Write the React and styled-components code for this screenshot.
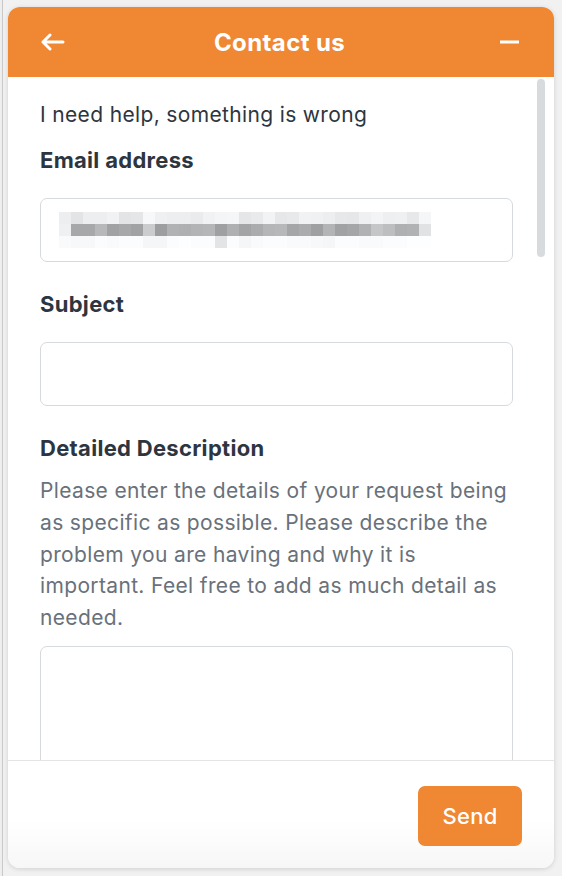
import React from 'react';
import styled, { createGlobalStyle } from 'styled-components';

const GlobalStyle = createGlobalStyle`
  html, body {
    margin: 0;
    padding: 0;
  }
  body {
    font-family: Inter, "Noto Sans", Roboto, sans-serif;
    background: #f1f1f1;
  }
`;

// blurred email, row by row (grey levels)
const mosaic = [
  [236, 226, 236, 236, 240, 226, 228, 246, 238, 236, 236, 233, 240, 243, 244, 228, 232, 241, 229, 231, 240, 239, 236, 230, 229, 238, 242, 237, 238, 230, 244],
  [238, 166, 166, 182, 160, 166, 160, 202, 156, 176, 174, 178, 180, 158, 174, 162, 170, 180, 182, 164, 170, 158, 178, 160, 164, 176, 196, 188, 174, 176, 224],
  [248, 246, 246, 250, 248, 250, 250, 244, 244, 250, 252, 250, 250, 226, 250, 244, 248, 250, 250, 248, 248, 246, 244, 250, 250, 248, 248, 250, 250, 252, 252],
];

const Page = styled.div`
  height: 876px;
  box-sizing: border-box;
  padding: 7px 8px 8px 8px;
  display: flex;
  background: linear-gradient(to right, #eeeeee 2px, #c9c9c9 2px, #c9c9c9 3px, #f1f1f1 3px);
`;

const Panel = styled.div`
  width: 546px;
  display: flex;
  flex-direction: column;
  background: #fff;
  border-radius: 12px;
  overflow: hidden;
  box-shadow: 0 1px 5px rgba(0, 0, 0, 0.14);
`;

const Header = styled.div`
  height: 70px;
  flex-shrink: 0;
  background: #ef8733;
  display: grid;
  grid-template-columns: 40px 1fr 40px;
  align-items: center;
  padding: 0 35px 0 32px;
  color: #fff;
`;

const Title = styled.div`
  text-align: center;
  font-size: 24px;
  font-weight: 700;
  letter-spacing: 0.4px;
`;

const IconSlot = styled.div`
  display: flex;
  justify-content: ${(p) => (p.$end ? 'flex-end' : 'flex-start')};
  align-items: center;
`;

const Body = styled.div`
  flex: 1;
  position: relative;
  overflow: hidden;
`;

const Thumb = styled.div`
  position: absolute;
  top: 2px;
  right: 9px;
  width: 8px;
  height: 178px;
  border-radius: 4px;
  background: #d8dbde;
`;

const Content = styled.div`
  padding: 22px 41px 0 32px;
  color: #2d3640;
`;

const Intro = styled.p`
  margin: 0 0 13px;
  font-size: 21px;
  letter-spacing: 0.35px;
  line-height: 32px;
`;

const Field = styled.div`
  display: flex;
  flex-direction: column;
  gap: 22px;
  margin-bottom: 26px;
`;

const Label = styled.label`
  font-size: 22px;
  font-weight: 700;
  letter-spacing: 0.3px;
  line-height: 32px;
`;

const Hint = styled.p`
  margin: -11px 0 0;
  font-size: 21px;
  letter-spacing: 0.35px;
  line-height: 31.75px;
  color: #69717a;
`;

const Input = styled.div`
  height: 64px;
  box-sizing: border-box;
  border: 1px solid #d6dadd;
  border-radius: 7px;
  display: flex;
  align-items: center;
  padding-left: 18px;
`;

const TextArea = styled(Input)`
  height: 200px;
  margin-top: -10px;
`;

const Mosaic = styled.div`
  display: grid;
  grid-template-columns: repeat(31, 12px);
  grid-auto-rows: 12px;
`;

const Cell = styled.div`
  background: ${(p) => `rgb(${p.$g}, ${p.$g + 2}, ${p.$g + 4})`};
`;

const Footer = styled.div`
  height: 108px;
  flex-shrink: 0;
  box-sizing: border-box;
  border-top: 1px solid #e4e4e4;
  background: linear-gradient(to bottom, #ffffff 55%, #f7f7f7 100%);
  display: flex;
  justify-content: flex-end;
  align-items: center;
  padding: 2px 32px 0 0;
`;

const SendButton = styled.button`
  width: 104px;
  height: 60px;
  border: none;
  border-radius: 7px;
  background: #ef8733;
  color: #fff;
  font-family: inherit;
  font-size: 22px;
  font-weight: 500;
  letter-spacing: 0.3px;
`;

function BackIcon() {
  return (
    <svg width="25" height="18" viewBox="0 0 25 18" fill="none">
      <path d="M23 9H3M10 2L3 9L10 16" stroke="#fff" strokeWidth="3" strokeLinecap="round" strokeLinejoin="round" />
    </svg>
  );
}

function MinusIcon() {
  return (
    <svg width="19" height="4" viewBox="0 0 19 4">
      <rect x="0" y="0.5" width="19" height="3" fill="#fff" />
    </svg>
  );
}

export default function App() {
  return (
    <Page>
      <GlobalStyle />
      <Panel>
        <Header>
          <IconSlot>
            <BackIcon />
          </IconSlot>
          <Title>Contact us</Title>
          <IconSlot $end>
            <MinusIcon />
          </IconSlot>
        </Header>
        <Body>
          <Content>
            <Intro>I need help, something is wrong</Intro>
            <Field>
              <Label>Email address</Label>
              <Input>
                <Mosaic>
                  {mosaic.flat().map((g, i) => (
                    <Cell key={i} $g={g} />
                  ))}
                </Mosaic>
              </Input>
            </Field>
            <Field>
              <Label>Subject</Label>
              <Input />
            </Field>
            <Field>
              <Label>Detailed Description</Label>
              <Hint>
                Please enter the details of your request being as specific as possible. Please
                describe the problem you are having and why it is important. Feel free to add as
                much detail as needed.
              </Hint>
              <TextArea />
            </Field>
          </Content>
          <Thumb />
        </Body>
        <Footer>
          <SendButton>Send</SendButton>
        </Footer>
      </Panel>
    </Page>
  );
}
